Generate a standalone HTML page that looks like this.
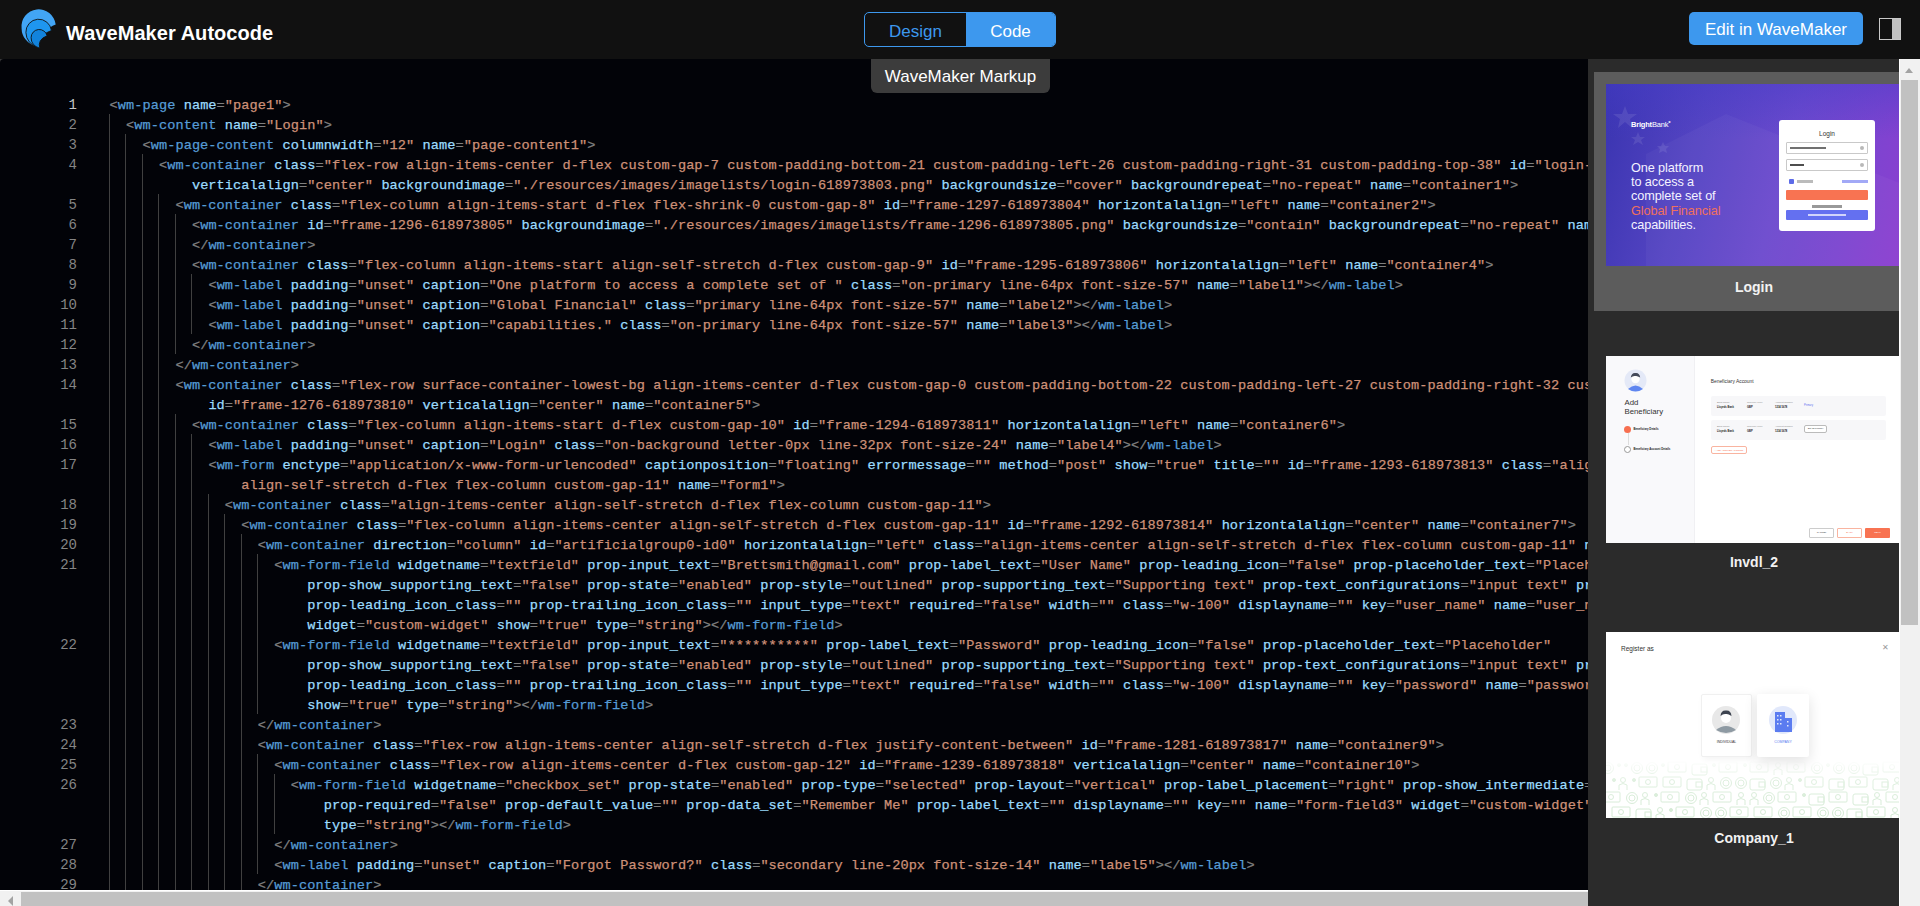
<!DOCTYPE html>
<html><head><meta charset="utf-8">
<style>
*{box-sizing:border-box}
html,body{margin:0;padding:0}
body{width:1920px;height:906px;overflow:hidden;position:relative;background:#020308;font-family:"Liberation Sans",sans-serif}
.hdr{position:absolute;left:0;top:0;width:1920px;height:59px;background:#111111;z-index:5}
.logo{position:absolute;left:19px;top:7px}
.title{position:absolute;left:66px;top:20.5px;letter-spacing:0.05px;font-weight:bold;font-size:20px;line-height:24px;color:#fff;white-space:nowrap}
.tog{position:absolute;left:864px;top:12px;width:192px;height:35px;border:1px solid #3d98ee;border-radius:5px;overflow:hidden;background:#111}
.tog .d{position:absolute;left:0;top:1.5px;width:101px;height:33px;color:#3d98ee;font-size:17px;line-height:33px;text-align:center}
.tog .c{position:absolute;left:101px;top:0;right:0;height:33px;background:#3d98ee;color:#fff;font-size:17px;line-height:38px;text-align:center}
.edit{position:absolute;left:1689px;top:12px;width:174px;height:33px;background:#3d98ee;border-radius:5px;color:#fff;font-size:17px;line-height:35px;text-align:center;white-space:nowrap}
.ptog{position:absolute;left:1879px;top:18px;width:22px;height:22px;border:1.5px solid #c8c8c8;background:#111}
.ptog:after{content:"";position:absolute;right:0;top:0;width:8px;height:100%;background:#c0c0c0}
.code{position:absolute;left:0;top:59px;width:1588px;height:831px;overflow:hidden;background:#020308;border-top-left-radius:4px}
.row{position:absolute;left:0;width:1588px;height:20px}
.row i{position:absolute;top:0;width:1px;height:20px;background:#404040}
.tx{position:absolute;top:0;white-space:pre;font-family:"Liberation Mono",monospace;font-size:13.6px;letter-spacing:0.079px;line-height:20px;color:#d4d4d4;padding-top:2px;-webkit-text-stroke:0.25px currentColor}
.tx b{font-weight:normal}
.tx .d{color:#808080}.tx .t{color:#569cd6}.tx .a{color:#9cdcfe}.tx .s{color:#ce9178}
.ln{position:absolute;left:20px;width:57px;top:0;text-align:right;font-family:"Liberation Mono",monospace;font-size:14px;line-height:20px;color:#858585;padding-top:1px}
.ln.act{color:#c6c6c6}
.tip{position:absolute;left:871px;top:59px;width:179px;height:34px;background:#3c3c3c;border-radius:0 0 6px 6px;color:#fff;font-size:17px;line-height:22px;padding-top:7px;text-align:center;z-index:4;white-space:nowrap}
.hsb{position:absolute;left:0;top:890px;width:1588px;height:16px;background:#f1f1f1;border-top:1px solid #fff}
.hsb .th{position:absolute;left:21px;top:1px;right:0;height:15px;background:#c1c1c1}
.hsb .ar{position:absolute;left:8px;top:5px;width:0;height:0;border-top:5px solid transparent;border-bottom:5px solid transparent;border-right:5px solid #a3a3a3}
.panel{position:absolute;left:1588px;top:59px;width:311px;height:847px;background:#2b2b2b;overflow:hidden}
.vsb{position:absolute;left:1899px;top:59px;width:21px;height:847px;background:#f1f1f1;border-left:1px solid #fff}
.vsb .th{position:absolute;left:1px;top:21px;width:17px;height:545px;background:#c1c1c1}
.vsb .ar{position:absolute;left:5px;top:9px;width:0;height:0;border-left:4.5px solid transparent;border-right:4.5px solid transparent;border-bottom:5px solid #a3a3a3}
.card{position:absolute;left:6px;width:320px}
.card.sel{background:#5c5c5c}
.thumb{position:absolute;left:12px;top:12px;width:296px;overflow:hidden}
.t1{background:linear-gradient(180deg,rgba(70,60,200,.45) 0%,rgba(70,60,200,0) 30%),linear-gradient(105deg,#3934b0 0%,#5444c2 30%,#6c4ace 58%,#7c45d0 80%,#8c3ed0 100%)}
.lbl{position:absolute;left:0;width:320px;text-align:center;color:#f2f2f2;font-weight:bold;font-size:14px;line-height:20px}
</style></head><body>
<div class="hdr">
  <svg class="logo" width="40" height="44" viewBox="19 7 40 44">
    <path d="M55.7 24.5 A17.1 17.1 0 0 0 21.6 28.5 Q21.8 41 36.5 46.8 Q43.5 28.5 55.7 24.5Z" fill="#42a5f5"/>
    <path d="M51.4 30.5 A12.8 12.8 0 0 0 25.9 32.5 Q26.2 43.5 38.5 47.8 Q41 33.5 51.4 30.5Z" fill="#1e96ef" stroke="#111" stroke-width="0.9"/>
    <path d="M47.1 35.8 A8.1 8.1 0 0 0 31.1 37.5 Q31 45.5 39.8 48.3 Q37.2 39.5 47.1 35.8Z" fill="#1283dc" stroke="#111" stroke-width="0.9"/>
  </svg>
  <div class="title">WaveMaker Autocode</div>
  <div class="tog"><div class="d">Design</div><div class="c">Code</div></div>
  <div class="edit">Edit in WaveMaker</div>
  <div class="ptog"></div>
</div>
<div style="position:absolute;left:0;top:59px;width:5px;height:5px;background:#3a3a3a"></div>
<div class="code">
<div class="row" style="top:35px"><div class="tx" style="left:109.50px"><b class="d">&lt;</b><b class="t">wm-page</b> <b class="a">name</b><b class="d">=</b><b class="s">&quot;page1&quot;</b><b class="d">&gt;</b></div><div class="ln act">1</div></div>
<div class="row" style="top:55px"><i style="left:109px"></i><div class="tx" style="left:125.98px"><b class="d">&lt;</b><b class="t">wm-content</b> <b class="a">name</b><b class="d">=</b><b class="s">&quot;Login&quot;</b><b class="d">&gt;</b></div><div class="ln">2</div></div>
<div class="row" style="top:75px"><i style="left:109px"></i><i style="left:125px"></i><div class="tx" style="left:142.46px"><b class="d">&lt;</b><b class="t">wm-page-content</b> <b class="a">columnwidth</b><b class="d">=</b><b class="s">&quot;12&quot;</b> <b class="a">name</b><b class="d">=</b><b class="s">&quot;page-content1&quot;</b><b class="d">&gt;</b></div><div class="ln">3</div></div>
<div class="row" style="top:95px"><i style="left:109px"></i><i style="left:125px"></i><i style="left:142px"></i><div class="tx" style="left:158.94px"><b class="d">&lt;</b><b class="t">wm-container</b> <b class="a">class</b><b class="d">=</b><b class="s">&quot;flex-row align-items-center d-flex custom-gap-7 custom-padding-bottom-21 custom-padding-left-26 custom-padding-right-31 custom-padding-top-38&quot;</b> <b class="a">id</b><b class="d">=</b><b class="s">&quot;login-618973803&quot;</b></div><div class="ln">4</div></div>
<div class="row" style="top:115px"><i style="left:109px"></i><i style="left:125px"></i><i style="left:142px"></i><div class="tx" style="left:191.90px"><b class="a">verticalalign</b><b class="d">=</b><b class="s">&quot;center&quot;</b> <b class="a">backgroundimage</b><b class="d">=</b><b class="s">&quot;./resources/images/imagelists/login-618973803.png&quot;</b> <b class="a">backgroundsize</b><b class="d">=</b><b class="s">&quot;cover&quot;</b> <b class="a">backgroundrepeat</b><b class="d">=</b><b class="s">&quot;no-repeat&quot;</b> <b class="a">name</b><b class="d">=</b><b class="s">&quot;container1&quot;</b><b class="d">&gt;</b></div></div>
<div class="row" style="top:135px"><i style="left:109px"></i><i style="left:125px"></i><i style="left:142px"></i><i style="left:158px"></i><div class="tx" style="left:175.42px"><b class="d">&lt;</b><b class="t">wm-container</b> <b class="a">class</b><b class="d">=</b><b class="s">&quot;flex-column align-items-start d-flex flex-shrink-0 custom-gap-8&quot;</b> <b class="a">id</b><b class="d">=</b><b class="s">&quot;frame-1297-618973804&quot;</b> <b class="a">horizontalalign</b><b class="d">=</b><b class="s">&quot;left&quot;</b> <b class="a">name</b><b class="d">=</b><b class="s">&quot;container2&quot;</b><b class="d">&gt;</b></div><div class="ln">5</div></div>
<div class="row" style="top:155px"><i style="left:109px"></i><i style="left:125px"></i><i style="left:142px"></i><i style="left:158px"></i><i style="left:175px"></i><div class="tx" style="left:191.90px"><b class="d">&lt;</b><b class="t">wm-container</b> <b class="a">id</b><b class="d">=</b><b class="s">&quot;frame-1296-618973805&quot;</b> <b class="a">backgroundimage</b><b class="d">=</b><b class="s">&quot;./resources/images/imagelists/frame-1296-618973805.png&quot;</b> <b class="a">backgroundsize</b><b class="d">=</b><b class="s">&quot;contain&quot;</b> <b class="a">backgroundrepeat</b><b class="d">=</b><b class="s">&quot;no-repeat&quot;</b> <b class="a">name</b><b class="d">=</b><b class="s">&quot;container3&quot;</b><b class="d">&gt;</b></div><div class="ln">6</div></div>
<div class="row" style="top:175px"><i style="left:109px"></i><i style="left:125px"></i><i style="left:142px"></i><i style="left:158px"></i><i style="left:175px"></i><div class="tx" style="left:191.90px"><b class="d">&lt;/</b><b class="t">wm-container</b><b class="d">&gt;</b></div><div class="ln">7</div></div>
<div class="row" style="top:195px"><i style="left:109px"></i><i style="left:125px"></i><i style="left:142px"></i><i style="left:158px"></i><i style="left:175px"></i><div class="tx" style="left:191.90px"><b class="d">&lt;</b><b class="t">wm-container</b> <b class="a">class</b><b class="d">=</b><b class="s">&quot;flex-column align-items-start align-self-stretch d-flex custom-gap-9&quot;</b> <b class="a">id</b><b class="d">=</b><b class="s">&quot;frame-1295-618973806&quot;</b> <b class="a">horizontalalign</b><b class="d">=</b><b class="s">&quot;left&quot;</b> <b class="a">name</b><b class="d">=</b><b class="s">&quot;container4&quot;</b><b class="d">&gt;</b></div><div class="ln">8</div></div>
<div class="row" style="top:215px"><i style="left:109px"></i><i style="left:125px"></i><i style="left:142px"></i><i style="left:158px"></i><i style="left:175px"></i><i style="left:191px"></i><div class="tx" style="left:208.38px"><b class="d">&lt;</b><b class="t">wm-label</b> <b class="a">padding</b><b class="d">=</b><b class="s">&quot;unset&quot;</b> <b class="a">caption</b><b class="d">=</b><b class="s">&quot;One platform to access a complete set of &quot;</b> <b class="a">class</b><b class="d">=</b><b class="s">&quot;on-primary line-64px font-size-57&quot;</b> <b class="a">name</b><b class="d">=</b><b class="s">&quot;label1&quot;</b><b class="d">&gt;</b><b class="d">&lt;/</b><b class="t">wm-label</b><b class="d">&gt;</b></div><div class="ln">9</div></div>
<div class="row" style="top:235px"><i style="left:109px"></i><i style="left:125px"></i><i style="left:142px"></i><i style="left:158px"></i><i style="left:175px"></i><i style="left:191px"></i><div class="tx" style="left:208.38px"><b class="d">&lt;</b><b class="t">wm-label</b> <b class="a">padding</b><b class="d">=</b><b class="s">&quot;unset&quot;</b> <b class="a">caption</b><b class="d">=</b><b class="s">&quot;Global Financial&quot;</b> <b class="a">class</b><b class="d">=</b><b class="s">&quot;primary line-64px font-size-57&quot;</b> <b class="a">name</b><b class="d">=</b><b class="s">&quot;label2&quot;</b><b class="d">&gt;</b><b class="d">&lt;/</b><b class="t">wm-label</b><b class="d">&gt;</b></div><div class="ln">10</div></div>
<div class="row" style="top:255px"><i style="left:109px"></i><i style="left:125px"></i><i style="left:142px"></i><i style="left:158px"></i><i style="left:175px"></i><i style="left:191px"></i><div class="tx" style="left:208.38px"><b class="d">&lt;</b><b class="t">wm-label</b> <b class="a">padding</b><b class="d">=</b><b class="s">&quot;unset&quot;</b> <b class="a">caption</b><b class="d">=</b><b class="s">&quot;capabilities.&quot;</b> <b class="a">class</b><b class="d">=</b><b class="s">&quot;on-primary line-64px font-size-57&quot;</b> <b class="a">name</b><b class="d">=</b><b class="s">&quot;label3&quot;</b><b class="d">&gt;</b><b class="d">&lt;/</b><b class="t">wm-label</b><b class="d">&gt;</b></div><div class="ln">11</div></div>
<div class="row" style="top:275px"><i style="left:109px"></i><i style="left:125px"></i><i style="left:142px"></i><i style="left:158px"></i><i style="left:175px"></i><div class="tx" style="left:191.90px"><b class="d">&lt;/</b><b class="t">wm-container</b><b class="d">&gt;</b></div><div class="ln">12</div></div>
<div class="row" style="top:295px"><i style="left:109px"></i><i style="left:125px"></i><i style="left:142px"></i><i style="left:158px"></i><div class="tx" style="left:175.42px"><b class="d">&lt;/</b><b class="t">wm-container</b><b class="d">&gt;</b></div><div class="ln">13</div></div>
<div class="row" style="top:315px"><i style="left:109px"></i><i style="left:125px"></i><i style="left:142px"></i><i style="left:158px"></i><div class="tx" style="left:175.42px"><b class="d">&lt;</b><b class="t">wm-container</b> <b class="a">class</b><b class="d">=</b><b class="s">&quot;flex-row surface-container-lowest-bg align-items-center d-flex custom-gap-0 custom-padding-bottom-22 custom-padding-left-27 custom-padding-right-32 custom-padding-top-38&quot;</b></div><div class="ln">14</div></div>
<div class="row" style="top:335px"><i style="left:109px"></i><i style="left:125px"></i><i style="left:142px"></i><i style="left:158px"></i><div class="tx" style="left:208.38px"><b class="a">id</b><b class="d">=</b><b class="s">&quot;frame-1276-618973810&quot;</b> <b class="a">verticalalign</b><b class="d">=</b><b class="s">&quot;center&quot;</b> <b class="a">name</b><b class="d">=</b><b class="s">&quot;container5&quot;</b><b class="d">&gt;</b></div></div>
<div class="row" style="top:355px"><i style="left:109px"></i><i style="left:125px"></i><i style="left:142px"></i><i style="left:158px"></i><i style="left:175px"></i><div class="tx" style="left:191.90px"><b class="d">&lt;</b><b class="t">wm-container</b> <b class="a">class</b><b class="d">=</b><b class="s">&quot;flex-column align-items-start d-flex custom-gap-10&quot;</b> <b class="a">id</b><b class="d">=</b><b class="s">&quot;frame-1294-618973811&quot;</b> <b class="a">horizontalalign</b><b class="d">=</b><b class="s">&quot;left&quot;</b> <b class="a">name</b><b class="d">=</b><b class="s">&quot;container6&quot;</b><b class="d">&gt;</b></div><div class="ln">15</div></div>
<div class="row" style="top:375px"><i style="left:109px"></i><i style="left:125px"></i><i style="left:142px"></i><i style="left:158px"></i><i style="left:175px"></i><i style="left:191px"></i><div class="tx" style="left:208.38px"><b class="d">&lt;</b><b class="t">wm-label</b> <b class="a">padding</b><b class="d">=</b><b class="s">&quot;unset&quot;</b> <b class="a">caption</b><b class="d">=</b><b class="s">&quot;Login&quot;</b> <b class="a">class</b><b class="d">=</b><b class="s">&quot;on-background letter-0px line-32px font-size-24&quot;</b> <b class="a">name</b><b class="d">=</b><b class="s">&quot;label4&quot;</b><b class="d">&gt;</b><b class="d">&lt;/</b><b class="t">wm-label</b><b class="d">&gt;</b></div><div class="ln">16</div></div>
<div class="row" style="top:395px"><i style="left:109px"></i><i style="left:125px"></i><i style="left:142px"></i><i style="left:158px"></i><i style="left:175px"></i><i style="left:191px"></i><div class="tx" style="left:208.38px"><b class="d">&lt;</b><b class="t">wm-form</b> <b class="a">enctype</b><b class="d">=</b><b class="s">&quot;application/x-www-form-urlencoded&quot;</b> <b class="a">captionposition</b><b class="d">=</b><b class="s">&quot;floating&quot;</b> <b class="a">errormessage</b><b class="d">=</b><b class="s">&quot;&quot;</b> <b class="a">method</b><b class="d">=</b><b class="s">&quot;post&quot;</b> <b class="a">show</b><b class="d">=</b><b class="s">&quot;true&quot;</b> <b class="a">title</b><b class="d">=</b><b class="s">&quot;&quot;</b> <b class="a">id</b><b class="d">=</b><b class="s">&quot;frame-1293-618973813&quot;</b> <b class="a">class</b><b class="d">=</b><b class="s">&quot;align-items-center</b></div><div class="ln">17</div></div>
<div class="row" style="top:415px"><i style="left:109px"></i><i style="left:125px"></i><i style="left:142px"></i><i style="left:158px"></i><i style="left:175px"></i><i style="left:191px"></i><div class="tx" style="left:241.35px"><b class="s">align-self-stretch d-flex flex-column custom-gap-11&quot;</b> <b class="a">name</b><b class="d">=</b><b class="s">&quot;form1&quot;</b><b class="d">&gt;</b></div></div>
<div class="row" style="top:435px"><i style="left:109px"></i><i style="left:125px"></i><i style="left:142px"></i><i style="left:158px"></i><i style="left:175px"></i><i style="left:191px"></i><i style="left:208px"></i><div class="tx" style="left:224.87px"><b class="d">&lt;</b><b class="t">wm-container</b> <b class="a">class</b><b class="d">=</b><b class="s">&quot;align-items-center align-self-stretch d-flex flex-column custom-gap-11&quot;</b><b class="d">&gt;</b></div><div class="ln">18</div></div>
<div class="row" style="top:455px"><i style="left:109px"></i><i style="left:125px"></i><i style="left:142px"></i><i style="left:158px"></i><i style="left:175px"></i><i style="left:191px"></i><i style="left:208px"></i><i style="left:224px"></i><div class="tx" style="left:241.35px"><b class="d">&lt;</b><b class="t">wm-container</b> <b class="a">class</b><b class="d">=</b><b class="s">&quot;flex-column align-items-center align-self-stretch d-flex custom-gap-11&quot;</b> <b class="a">id</b><b class="d">=</b><b class="s">&quot;frame-1292-618973814&quot;</b> <b class="a">horizontalalign</b><b class="d">=</b><b class="s">&quot;center&quot;</b> <b class="a">name</b><b class="d">=</b><b class="s">&quot;container7&quot;</b><b class="d">&gt;</b></div><div class="ln">19</div></div>
<div class="row" style="top:475px"><i style="left:109px"></i><i style="left:125px"></i><i style="left:142px"></i><i style="left:158px"></i><i style="left:175px"></i><i style="left:191px"></i><i style="left:208px"></i><i style="left:224px"></i><i style="left:241px"></i><div class="tx" style="left:257.83px"><b class="d">&lt;</b><b class="t">wm-container</b> <b class="a">direction</b><b class="d">=</b><b class="s">&quot;column&quot;</b> <b class="a">id</b><b class="d">=</b><b class="s">&quot;artificialgroup0-id0&quot;</b> <b class="a">horizontalalign</b><b class="d">=</b><b class="s">&quot;left&quot;</b> <b class="a">class</b><b class="d">=</b><b class="s">&quot;align-items-center align-self-stretch d-flex flex-column custom-gap-11&quot;</b> <b class="a">name</b><b class="d">=</b><b class="s">&quot;container8&quot;</b><b class="d">&gt;</b></div><div class="ln">20</div></div>
<div class="row" style="top:495px"><i style="left:109px"></i><i style="left:125px"></i><i style="left:142px"></i><i style="left:158px"></i><i style="left:175px"></i><i style="left:191px"></i><i style="left:208px"></i><i style="left:224px"></i><i style="left:241px"></i><i style="left:257px"></i><div class="tx" style="left:274.31px"><b class="d">&lt;</b><b class="t">wm-form-field</b> <b class="a">widgetname</b><b class="d">=</b><b class="s">&quot;textfield&quot;</b> <b class="a">prop-input_text</b><b class="d">=</b><b class="s">&quot;Brettsmith@gmail.com&quot;</b> <b class="a">prop-label_text</b><b class="d">=</b><b class="s">&quot;User Name&quot;</b> <b class="a">prop-leading_icon</b><b class="d">=</b><b class="s">&quot;false&quot;</b> <b class="a">prop-placeholder_text</b><b class="d">=</b><b class="s">&quot;Placeholder&quot;</b></div><div class="ln">21</div></div>
<div class="row" style="top:515px"><i style="left:109px"></i><i style="left:125px"></i><i style="left:142px"></i><i style="left:158px"></i><i style="left:175px"></i><i style="left:191px"></i><i style="left:208px"></i><i style="left:224px"></i><i style="left:241px"></i><i style="left:257px"></i><div class="tx" style="left:307.27px"><b class="a">prop-show_supporting_text</b><b class="d">=</b><b class="s">&quot;false&quot;</b> <b class="a">prop-state</b><b class="d">=</b><b class="s">&quot;enabled&quot;</b> <b class="a">prop-style</b><b class="d">=</b><b class="s">&quot;outlined&quot;</b> <b class="a">prop-supporting_text</b><b class="d">=</b><b class="s">&quot;Supporting text&quot;</b> <b class="a">prop-text_configurations</b><b class="d">=</b><b class="s">&quot;input text&quot;</b> <b class="a">prop-trailing_icon</b><b class="d">=</b><b class="s">&quot;false&quot;</b></div></div>
<div class="row" style="top:535px"><i style="left:109px"></i><i style="left:125px"></i><i style="left:142px"></i><i style="left:158px"></i><i style="left:175px"></i><i style="left:191px"></i><i style="left:208px"></i><i style="left:224px"></i><i style="left:241px"></i><i style="left:257px"></i><div class="tx" style="left:307.27px"><b class="a">prop-leading_icon_class</b><b class="d">=</b><b class="s">&quot;&quot;</b> <b class="a">prop-trailing_icon_class</b><b class="d">=</b><b class="s">&quot;&quot;</b> <b class="a">input_type</b><b class="d">=</b><b class="s">&quot;text&quot;</b> <b class="a">required</b><b class="d">=</b><b class="s">&quot;false&quot;</b> <b class="a">width</b><b class="d">=</b><b class="s">&quot;&quot;</b> <b class="a">class</b><b class="d">=</b><b class="s">&quot;w-100&quot;</b> <b class="a">displayname</b><b class="d">=</b><b class="s">&quot;&quot;</b> <b class="a">key</b><b class="d">=</b><b class="s">&quot;user_name&quot;</b> <b class="a">name</b><b class="d">=</b><b class="s">&quot;user_name&quot;</b></div></div>
<div class="row" style="top:555px"><i style="left:109px"></i><i style="left:125px"></i><i style="left:142px"></i><i style="left:158px"></i><i style="left:175px"></i><i style="left:191px"></i><i style="left:208px"></i><i style="left:224px"></i><i style="left:241px"></i><i style="left:257px"></i><div class="tx" style="left:307.27px"><b class="a">widget</b><b class="d">=</b><b class="s">&quot;custom-widget&quot;</b> <b class="a">show</b><b class="d">=</b><b class="s">&quot;true&quot;</b> <b class="a">type</b><b class="d">=</b><b class="s">&quot;string&quot;</b><b class="d">&gt;</b><b class="d">&lt;/</b><b class="t">wm-form-field</b><b class="d">&gt;</b></div></div>
<div class="row" style="top:575px"><i style="left:109px"></i><i style="left:125px"></i><i style="left:142px"></i><i style="left:158px"></i><i style="left:175px"></i><i style="left:191px"></i><i style="left:208px"></i><i style="left:224px"></i><i style="left:241px"></i><i style="left:257px"></i><div class="tx" style="left:274.31px"><b class="d">&lt;</b><b class="t">wm-form-field</b> <b class="a">widgetname</b><b class="d">=</b><b class="s">&quot;textfield&quot;</b> <b class="a">prop-input_text</b><b class="d">=</b><b class="s">&quot;**********&quot;</b> <b class="a">prop-label_text</b><b class="d">=</b><b class="s">&quot;Password&quot;</b> <b class="a">prop-leading_icon</b><b class="d">=</b><b class="s">&quot;false&quot;</b> <b class="a">prop-placeholder_text</b><b class="d">=</b><b class="s">&quot;Placeholder&quot;</b></div><div class="ln">22</div></div>
<div class="row" style="top:595px"><i style="left:109px"></i><i style="left:125px"></i><i style="left:142px"></i><i style="left:158px"></i><i style="left:175px"></i><i style="left:191px"></i><i style="left:208px"></i><i style="left:224px"></i><i style="left:241px"></i><i style="left:257px"></i><div class="tx" style="left:307.27px"><b class="a">prop-show_supporting_text</b><b class="d">=</b><b class="s">&quot;false&quot;</b> <b class="a">prop-state</b><b class="d">=</b><b class="s">&quot;enabled&quot;</b> <b class="a">prop-style</b><b class="d">=</b><b class="s">&quot;outlined&quot;</b> <b class="a">prop-supporting_text</b><b class="d">=</b><b class="s">&quot;Supporting text&quot;</b> <b class="a">prop-text_configurations</b><b class="d">=</b><b class="s">&quot;input text&quot;</b> <b class="a">prop-trailing_icon</b><b class="d">=</b><b class="s">&quot;true&quot;</b></div></div>
<div class="row" style="top:615px"><i style="left:109px"></i><i style="left:125px"></i><i style="left:142px"></i><i style="left:158px"></i><i style="left:175px"></i><i style="left:191px"></i><i style="left:208px"></i><i style="left:224px"></i><i style="left:241px"></i><i style="left:257px"></i><div class="tx" style="left:307.27px"><b class="a">prop-leading_icon_class</b><b class="d">=</b><b class="s">&quot;&quot;</b> <b class="a">prop-trailing_icon_class</b><b class="d">=</b><b class="s">&quot;&quot;</b> <b class="a">input_type</b><b class="d">=</b><b class="s">&quot;text&quot;</b> <b class="a">required</b><b class="d">=</b><b class="s">&quot;false&quot;</b> <b class="a">width</b><b class="d">=</b><b class="s">&quot;&quot;</b> <b class="a">class</b><b class="d">=</b><b class="s">&quot;w-100&quot;</b> <b class="a">displayname</b><b class="d">=</b><b class="s">&quot;&quot;</b> <b class="a">key</b><b class="d">=</b><b class="s">&quot;password&quot;</b> <b class="a">name</b><b class="d">=</b><b class="s">&quot;password&quot;</b></div></div>
<div class="row" style="top:635px"><i style="left:109px"></i><i style="left:125px"></i><i style="left:142px"></i><i style="left:158px"></i><i style="left:175px"></i><i style="left:191px"></i><i style="left:208px"></i><i style="left:224px"></i><i style="left:241px"></i><i style="left:257px"></i><div class="tx" style="left:307.27px"><b class="a">show</b><b class="d">=</b><b class="s">&quot;true&quot;</b> <b class="a">type</b><b class="d">=</b><b class="s">&quot;string&quot;</b><b class="d">&gt;</b><b class="d">&lt;/</b><b class="t">wm-form-field</b><b class="d">&gt;</b></div></div>
<div class="row" style="top:655px"><i style="left:109px"></i><i style="left:125px"></i><i style="left:142px"></i><i style="left:158px"></i><i style="left:175px"></i><i style="left:191px"></i><i style="left:208px"></i><i style="left:224px"></i><i style="left:241px"></i><div class="tx" style="left:257.83px"><b class="d">&lt;/</b><b class="t">wm-container</b><b class="d">&gt;</b></div><div class="ln">23</div></div>
<div class="row" style="top:675px"><i style="left:109px"></i><i style="left:125px"></i><i style="left:142px"></i><i style="left:158px"></i><i style="left:175px"></i><i style="left:191px"></i><i style="left:208px"></i><i style="left:224px"></i><i style="left:241px"></i><div class="tx" style="left:257.83px"><b class="d">&lt;</b><b class="t">wm-container</b> <b class="a">class</b><b class="d">=</b><b class="s">&quot;flex-row align-items-center align-self-stretch d-flex justify-content-between&quot;</b> <b class="a">id</b><b class="d">=</b><b class="s">&quot;frame-1281-618973817&quot;</b> <b class="a">name</b><b class="d">=</b><b class="s">&quot;container9&quot;</b><b class="d">&gt;</b></div><div class="ln">24</div></div>
<div class="row" style="top:695px"><i style="left:109px"></i><i style="left:125px"></i><i style="left:142px"></i><i style="left:158px"></i><i style="left:175px"></i><i style="left:191px"></i><i style="left:208px"></i><i style="left:224px"></i><i style="left:241px"></i><i style="left:257px"></i><div class="tx" style="left:274.31px"><b class="d">&lt;</b><b class="t">wm-container</b> <b class="a">class</b><b class="d">=</b><b class="s">&quot;flex-row align-items-center d-flex custom-gap-12&quot;</b> <b class="a">id</b><b class="d">=</b><b class="s">&quot;frame-1239-618973818&quot;</b> <b class="a">verticalalign</b><b class="d">=</b><b class="s">&quot;center&quot;</b> <b class="a">name</b><b class="d">=</b><b class="s">&quot;container10&quot;</b><b class="d">&gt;</b></div><div class="ln">25</div></div>
<div class="row" style="top:715px"><i style="left:109px"></i><i style="left:125px"></i><i style="left:142px"></i><i style="left:158px"></i><i style="left:175px"></i><i style="left:191px"></i><i style="left:208px"></i><i style="left:224px"></i><i style="left:241px"></i><i style="left:257px"></i><i style="left:274px"></i><div class="tx" style="left:290.79px"><b class="d">&lt;</b><b class="t">wm-form-field</b> <b class="a">widgetname</b><b class="d">=</b><b class="s">&quot;checkbox_set&quot;</b> <b class="a">prop-state</b><b class="d">=</b><b class="s">&quot;enabled&quot;</b> <b class="a">prop-type</b><b class="d">=</b><b class="s">&quot;selected&quot;</b> <b class="a">prop-layout</b><b class="d">=</b><b class="s">&quot;vertical&quot;</b> <b class="a">prop-label_placement</b><b class="d">=</b><b class="s">&quot;right&quot;</b> <b class="a">prop-show_intermediate</b><b class="d">=</b><b class="s">&quot;false&quot;</b></div><div class="ln">26</div></div>
<div class="row" style="top:735px"><i style="left:109px"></i><i style="left:125px"></i><i style="left:142px"></i><i style="left:158px"></i><i style="left:175px"></i><i style="left:191px"></i><i style="left:208px"></i><i style="left:224px"></i><i style="left:241px"></i><i style="left:257px"></i><i style="left:274px"></i><div class="tx" style="left:323.75px"><b class="a">prop-required</b><b class="d">=</b><b class="s">&quot;false&quot;</b> <b class="a">prop-default_value</b><b class="d">=</b><b class="s">&quot;&quot;</b> <b class="a">prop-data_set</b><b class="d">=</b><b class="s">&quot;Remember Me&quot;</b> <b class="a">prop-label_text</b><b class="d">=</b><b class="s">&quot;&quot;</b> <b class="a">displayname</b><b class="d">=</b><b class="s">&quot;&quot;</b> <b class="a">key</b><b class="d">=</b><b class="s">&quot;&quot;</b> <b class="a">name</b><b class="d">=</b><b class="s">&quot;form-field3&quot;</b> <b class="a">widget</b><b class="d">=</b><b class="s">&quot;custom-widget&quot;</b></div></div>
<div class="row" style="top:755px"><i style="left:109px"></i><i style="left:125px"></i><i style="left:142px"></i><i style="left:158px"></i><i style="left:175px"></i><i style="left:191px"></i><i style="left:208px"></i><i style="left:224px"></i><i style="left:241px"></i><i style="left:257px"></i><i style="left:274px"></i><div class="tx" style="left:323.75px"><b class="a">type</b><b class="d">=</b><b class="s">&quot;string&quot;</b><b class="d">&gt;</b><b class="d">&lt;/</b><b class="t">wm-form-field</b><b class="d">&gt;</b></div></div>
<div class="row" style="top:775px"><i style="left:109px"></i><i style="left:125px"></i><i style="left:142px"></i><i style="left:158px"></i><i style="left:175px"></i><i style="left:191px"></i><i style="left:208px"></i><i style="left:224px"></i><i style="left:241px"></i><i style="left:257px"></i><div class="tx" style="left:274.31px"><b class="d">&lt;/</b><b class="t">wm-container</b><b class="d">&gt;</b></div><div class="ln">27</div></div>
<div class="row" style="top:795px"><i style="left:109px"></i><i style="left:125px"></i><i style="left:142px"></i><i style="left:158px"></i><i style="left:175px"></i><i style="left:191px"></i><i style="left:208px"></i><i style="left:224px"></i><i style="left:241px"></i><i style="left:257px"></i><div class="tx" style="left:274.31px"><b class="d">&lt;</b><b class="t">wm-label</b> <b class="a">padding</b><b class="d">=</b><b class="s">&quot;unset&quot;</b> <b class="a">caption</b><b class="d">=</b><b class="s">&quot;Forgot Password?&quot;</b> <b class="a">class</b><b class="d">=</b><b class="s">&quot;secondary line-20px font-size-14&quot;</b> <b class="a">name</b><b class="d">=</b><b class="s">&quot;label5&quot;</b><b class="d">&gt;</b><b class="d">&lt;/</b><b class="t">wm-label</b><b class="d">&gt;</b></div><div class="ln">28</div></div>
<div class="row" style="top:815px"><i style="left:109px"></i><i style="left:125px"></i><i style="left:142px"></i><i style="left:158px"></i><i style="left:175px"></i><i style="left:191px"></i><i style="left:208px"></i><i style="left:224px"></i><i style="left:241px"></i><div class="tx" style="left:257.83px"><b class="d">&lt;/</b><b class="t">wm-container</b><b class="d">&gt;</b></div><div class="ln">29</div></div>
</div>
<div class="tip">WaveMaker Markup</div>
<div class="hsb"><div class="ar"></div><div class="th"></div></div>
<div class="panel">
  <div class="card sel" style="top:13px;height:239px">
    <div class="thumb t1" style="height:182px">
      <svg style="position:absolute;left:0;top:0" width="296" height="182">
        <g fill="#ffffff" opacity="0.09">
          <polygon points="19,22 22,30 31,30 24,35 26,44 19,38 12,44 14,35 7,30 16,30"/>
          <polygon points="32,48 34,53 39,53 35,56 37,61 32,58 27,61 29,56 25,53 30,53"/>
          <polygon points="57,58 59,62 63,62 60,65 61,69 57,67 53,69 54,65 51,62 55,62"/>
        </g>
        <g fill="#ffffff" opacity="0.035">
          <polygon points="40,70 120,30 296,100 296,182 40,182"/>
        </g>
      </svg>
      <div style="position:absolute;left:25px;top:36px;color:#fff;font-size:7.5px;font-weight:bold;letter-spacing:-0.2px;white-space:nowrap">Bright<span style="font-weight:normal">Bank</span><span style="font-size:6px;vertical-align:top">*</span></div>
      <div style="position:absolute;left:25px;top:77px;color:#f4f2ff;font-size:12.7px;line-height:14.2px;white-space:nowrap;letter-spacing:-0.1px">One platform<br>to access a<br>complete set of<br><span style="color:#f0705c">Global Financial</span><br>capabilities.</div>
      <div style="position:absolute;left:173px;top:36px;width:96px;height:111px;background:#fff;border-radius:3px">
        <div style="position:absolute;left:0;top:9.5px;width:96px;text-align:center;font-size:6.5px;color:#333">Login</div>
        <div style="position:absolute;left:7px;top:22px;width:82px;height:12px;border:1px solid #c9c9c9;border-radius:1px"><div style="position:absolute;left:3px;top:4px;width:36px;height:2px;background:#333;opacity:.7"></div><div style="position:absolute;right:3px;top:3px;width:4px;height:4px;background:#888;opacity:.6;border-radius:2px"></div></div>
        <div style="position:absolute;left:7px;top:39px;width:82px;height:12px;border:1px solid #c9c9c9;border-radius:1px"><div style="position:absolute;left:3px;top:4px;width:14px;height:1.5px;background:#222;opacity:.8"></div><div style="position:absolute;right:3px;top:3px;width:4px;height:4px;background:#888;opacity:.6;border-radius:2px"></div></div>
        <div style="position:absolute;left:10px;top:59px;width:5px;height:5px;background:#5d6be8;border-radius:1px"></div>
        <div style="position:absolute;left:18px;top:60px;width:16px;height:3px;background:#777;opacity:.5"></div>
        <div style="position:absolute;left:63px;top:60px;width:26px;height:3px;background:#6470f0;opacity:.6"></div>
        <div style="position:absolute;left:7px;top:70px;width:82px;height:10px;background:#f87352;border-radius:1px"></div>
        <div style="position:absolute;left:33px;top:85px;width:30px;height:3px;background:#555;opacity:.6"></div>
        <div style="position:absolute;left:7px;top:90px;width:82px;height:10px;background:#6470f0;border-radius:1px"><div style="position:absolute;left:22px;top:4px;width:38px;height:2px;background:#fff;opacity:.7"></div></div>
      </div>
    </div>
    <div class="lbl" style="top:205px">Login</div>
  </div>
  <div class="card" style="top:285px;height:243px">
    <div class="thumb" style="height:187px;background:#fff;font-family:'Liberation Sans',sans-serif">
      <div style="position:absolute;left:0;top:0;width:89px;height:187px;background:#f9f9fb;border-right:1px solid #f0f0f3"></div>
      <svg style="position:absolute;left:18px;top:13px" width="23" height="23" viewBox="0 0 23 23">
        <circle cx="11.5" cy="11.5" r="11" fill="#e4e9f7"/>
        <path d="M4 20 Q11.5 13 19 20 Q11.5 25 4 20Z" fill="#5f86f0"/>
        <circle cx="11.5" cy="10" r="4.2" fill="#fff"/>
        <path d="M6.8 8.5 Q7.5 3.5 11.5 4 Q15.5 3.5 16.2 8.5 Q13 6.5 11.5 7 Q9 6.5 6.8 8.5Z" fill="#444a5a"/>
      </svg>
      <div style="position:absolute;left:18.5px;top:41.6px;font-size:7.8px;line-height:9.5px;color:#333;white-space:nowrap">Add<br>Beneficiary</div>
      <div style="position:absolute;left:18px;top:69.5px;width:7px;height:7px;border-radius:50%;background:#f76f50"></div>
      <div style="position:absolute;left:27.5px;top:72px;font-size:2.8px;line-height:3.2px;font-weight:bold;color:#222;white-space:nowrap">Beneficiary Details</div>
      <div style="position:absolute;left:21.5px;top:77px;width:1px;height:12px;background:#ddd"></div>
      <div style="position:absolute;left:18px;top:89.5px;width:7px;height:7px;border-radius:50%;border:1px solid #999;background:#fff"></div>
      <div style="position:absolute;left:27.5px;top:91.7px;font-size:2.8px;line-height:3.2px;font-weight:bold;color:#222;white-space:nowrap">Beneficiary Account Details</div>
      <div style="position:absolute;left:104.7px;top:23.4px;font-size:4.9px;line-height:6px;color:#333;white-space:nowrap">Beneficiary Account</div>
      <div style="position:absolute;left:105px;top:40px;width:175px;height:20px;background:#f7f7f9;border-radius:2px;font-size:2.4px;line-height:3px;white-space:nowrap">
        <div style="position:absolute;left:6px;top:5px;color:#888">Bank Name</div><div style="position:absolute;left:6px;top:10px;color:#222;font-weight:bold;font-size:2.6px">Lloyeds Bank</div>
        <div style="position:absolute;left:36px;top:5px;color:#888">Currency Type</div><div style="position:absolute;left:36px;top:10px;color:#222;font-weight:bold;font-size:2.6px">GBP</div>
        <div style="position:absolute;left:64px;top:5px;color:#888">Account Number</div><div style="position:absolute;left:64px;top:10px;color:#222;font-weight:bold;font-size:2.6px">1234 5678</div>
        <div style="position:absolute;left:93px;top:8px;color:#6470f0;font-size:2.6px">Primary</div>
      </div>
      <div style="position:absolute;left:105px;top:64px;width:175px;height:20px;background:#f7f7f9;border-radius:2px;font-size:2.4px;line-height:3px;white-space:nowrap">
        <div style="position:absolute;left:6px;top:5px;color:#888">Bank Name</div><div style="position:absolute;left:6px;top:10px;color:#222;font-weight:bold;font-size:2.6px">Lloyeds Bank</div>
        <div style="position:absolute;left:36px;top:5px;color:#888">Currency Type</div><div style="position:absolute;left:36px;top:10px;color:#222;font-weight:bold;font-size:2.6px">GBP</div>
        <div style="position:absolute;left:64px;top:5px;color:#888">Account Number</div><div style="position:absolute;left:64px;top:10px;color:#222;font-weight:bold;font-size:2.6px">1234 5678</div>
        <div style="position:absolute;left:93px;top:5px;width:23px;height:8px;border:1px solid #bbb;border-radius:2px;background:#fff;font-size:2.4px;line-height:6px;text-align:center;color:#333">Set as Primary</div>
      </div>
      <div style="position:absolute;left:105px;top:90px;width:36px;height:8px;border:1px solid #f9b4a0;border-radius:2px;font-size:2.2px;line-height:6px;color:#f76f50;text-align:center;white-space:nowrap">+ ADD ANOTHER ACCOUNT</div>
      <div style="position:absolute;left:203px;top:172px;width:25px;height:10px;border:1px solid #ccc;border-radius:1px;font-size:2.4px;line-height:8px;text-align:center;color:#444">CANCEL</div>
      <div style="position:absolute;left:231px;top:172px;width:25px;height:10px;border:1px solid #f9b4a0;border-radius:1px;font-size:2.4px;line-height:8px;text-align:center;color:#f76f50">BACK</div>
      <div style="position:absolute;left:259px;top:172px;width:25px;height:10px;background:#f87352;border-radius:1px;font-size:2.4px;line-height:10px;text-align:center;color:#fff">NEXT</div>
    </div>
    <div class="lbl" style="top:208px">Invdl_2</div>
  </div>
  <div class="card" style="top:561px;height:242px">
    <div class="thumb" style="height:186px;background:#fff">
      <div style="position:absolute;left:15px;top:13px;font-size:6.5px;color:#333;white-space:nowrap">Register as</div>
      <div style="position:absolute;left:276px;top:11px;font-size:8px;color:#999">&#x2715;</div>
      <svg style="position:absolute;left:0;top:128px" width="296" height="58"><g fill="none" stroke="#d3ead3" stroke-width="1"><circle cx="2" cy="8" r="5.5"/><circle cx="2" cy="8" r="3"/><circle cx="13" cy="5" r="1.5" fill="#d5ebd5"/><circle cx="20" cy="5" r="1.5" fill="#d5ebd5"/><circle cx="31" cy="8" r="5.5"/><circle cx="31" cy="8" r="3"/><circle cx="46" cy="8" r="5.5"/><circle cx="46" cy="8" r="3"/><circle cx="57" cy="5" r="1.5" fill="#d5ebd5"/><rect x="62" y="2" width="18" height="10" rx="1"/><circle cx="71" cy="7" r="2.5"/><rect x="86" y="4" width="15" height="11" rx="2"/><rect x="95" y="7" width="6" height="5"/><circle cx="108" cy="5" r="1.5" fill="#d5ebd5"/><rect x="113" y="2" width="18" height="10" rx="1"/><circle cx="122" cy="7" r="2.5"/><circle cx="139" cy="5" r="1.5" fill="#d5ebd5"/><rect x="144" y="2" width="18" height="10" rx="1"/><circle cx="153" cy="7" r="2.5"/><circle cx="172" cy="5" r="2.5"/><path d="M168 15 V10 Q172 7 176 10 V15"/><rect x="181" y="2" width="18" height="10" rx="1"/><circle cx="190" cy="7" r="2.5"/><circle cx="211" cy="8" r="5.5"/><circle cx="211" cy="8" r="3"/><circle cx="222" cy="5" r="1.5" fill="#d5ebd5"/><circle cx="233" cy="8" r="5.5"/><circle cx="233" cy="8" r="3"/><circle cx="248" cy="8" r="5.5"/><circle cx="248" cy="8" r="3"/><rect x="257" y="4" width="15" height="11" rx="2"/><rect x="266" y="7" width="6" height="5"/><rect x="277" y="2" width="18" height="10" rx="1"/><circle cx="286" cy="7" r="2.5"/><circle cx="8" cy="20" r="1.5" fill="#d5ebd5"/><circle cx="17" cy="20" r="2.5"/><path d="M13 30 V25 Q17 22 21 25 V30"/><circle cx="28" cy="20" r="1.5" fill="#d5ebd5"/><rect x="33" y="17" width="18" height="10" rx="1"/><circle cx="42" cy="22" r="2.5"/><rect x="57" y="17" width="18" height="10" rx="1"/><circle cx="66" cy="22" r="2.5"/><rect x="81" y="19" width="15" height="11" rx="2"/><rect x="90" y="22" width="6" height="5"/><circle cx="105" cy="20" r="2.5"/><path d="M101 30 V25 Q105 22 109 25 V30"/><circle cx="120" cy="23" r="5.5"/><circle cx="120" cy="23" r="3"/><circle cx="135" cy="23" r="5.5"/><circle cx="135" cy="23" r="3"/><rect x="144" y="19" width="15" height="11" rx="2"/><rect x="153" y="22" width="6" height="5"/><circle cx="170" cy="23" r="5.5"/><circle cx="170" cy="23" r="3"/><circle cx="183" cy="20" r="2.5"/><path d="M179 30 V25 Q183 22 187 25 V30"/><circle cx="194" cy="20" r="1.5" fill="#d5ebd5"/><rect x="199" y="17" width="18" height="10" rx="1"/><circle cx="208" cy="22" r="2.5"/><rect x="223" y="19" width="15" height="11" rx="2"/><rect x="232" y="22" width="6" height="5"/><rect x="243" y="17" width="18" height="10" rx="1"/><circle cx="252" cy="22" r="2.5"/><rect x="267" y="19" width="15" height="11" rx="2"/><rect x="276" y="22" width="6" height="5"/><circle cx="291" cy="20" r="2.5"/><path d="M287 30 V25 Q291 22 295 25 V30"/><rect x="-4" y="32" width="18" height="10" rx="1"/><circle cx="5" cy="37" r="2.5"/><circle cx="26" cy="38" r="5.5"/><circle cx="26" cy="38" r="3"/><circle cx="39" cy="35" r="2.5"/><path d="M35 45 V40 Q39 37 43 40 V45"/><circle cx="50" cy="35" r="1.5" fill="#d5ebd5"/><rect x="55" y="32" width="18" height="10" rx="1"/><circle cx="64" cy="37" r="2.5"/><circle cx="85" cy="38" r="5.5"/><circle cx="85" cy="38" r="3"/><circle cx="98" cy="35" r="2.5"/><path d="M94 45 V40 Q98 37 102 40 V45"/><rect x="107" y="32" width="18" height="10" rx="1"/><circle cx="116" cy="37" r="2.5"/><circle cx="135" cy="35" r="2.5"/><path d="M131 45 V40 Q135 37 139 40 V45"/><circle cx="148" cy="35" r="2.5"/><path d="M144 45 V40 Q148 37 152 40 V45"/><circle cx="163" cy="38" r="5.5"/><circle cx="163" cy="38" r="3"/><rect x="172" y="32" width="18" height="10" rx="1"/><circle cx="181" cy="37" r="2.5"/><circle cx="198" cy="35" r="1.5" fill="#d5ebd5"/><rect x="203" y="34" width="15" height="11" rx="2"/><rect x="212" y="37" width="6" height="5"/><rect x="223" y="32" width="18" height="10" rx="1"/><circle cx="232" cy="37" r="2.5"/><rect x="247" y="34" width="15" height="11" rx="2"/><rect x="256" y="37" width="6" height="5"/><circle cx="271" cy="35" r="2.5"/><path d="M267 45 V40 Q271 37 275 40 V45"/><rect x="280" y="32" width="18" height="10" rx="1"/><circle cx="289" cy="37" r="2.5"/><rect x="6" y="47" width="18" height="10" rx="1"/><circle cx="15" cy="52" r="2.5"/><rect x="30" y="49" width="15" height="11" rx="2"/><rect x="39" y="52" width="6" height="5"/><circle cx="54" cy="50" r="2.5"/><path d="M50 60 V55 Q54 52 58 55 V60"/><circle cx="65" cy="50" r="1.5" fill="#d5ebd5"/><rect x="70" y="47" width="18" height="10" rx="1"/><circle cx="79" cy="52" r="2.5"/><circle cx="100" cy="53" r="5.5"/><circle cx="100" cy="53" r="3"/><circle cx="115" cy="53" r="5.5"/><circle cx="115" cy="53" r="3"/><rect x="124" y="47" width="18" height="10" rx="1"/><circle cx="133" cy="52" r="2.5"/><rect x="148" y="47" width="18" height="10" rx="1"/><circle cx="157" cy="52" r="2.5"/><circle cx="178" cy="53" r="5.5"/><circle cx="178" cy="53" r="3"/><rect x="187" y="47" width="18" height="10" rx="1"/><circle cx="196" cy="52" r="2.5"/><circle cx="217" cy="53" r="5.5"/><circle cx="217" cy="53" r="3"/><circle cx="232" cy="53" r="5.5"/><circle cx="232" cy="53" r="3"/><rect x="241" y="49" width="15" height="11" rx="2"/><rect x="250" y="52" width="6" height="5"/><rect x="261" y="47" width="18" height="10" rx="1"/><circle cx="270" cy="52" r="2.5"/><circle cx="289" cy="50" r="2.5"/><path d="M285 60 V55 Q289 52 293 55 V60"/><rect x="298" y="49" width="15" height="11" rx="2"/><rect x="307" y="52" width="6" height="5"/></g><defs><linearGradient id="gf" x1="0" y1="0" x2="0" y2="1"><stop offset="0" stop-color="#fff" stop-opacity="1"/><stop offset="0.35" stop-color="#fff" stop-opacity="0.3"/><stop offset="1" stop-color="#fff" stop-opacity="0"/></linearGradient></defs><rect x="0" y="0" width="296" height="58" fill="url(#gf)"/></svg>
      <div style="position:absolute;left:95px;top:62px;width:51px;height:63px;background:#fff;border:1px solid #f0f0f0;border-radius:2px;box-shadow:2px 2px 6px rgba(0,0,0,.05)"></div>
      <div style="position:absolute;left:151px;top:62px;width:52px;height:63px;background:#fff;border-radius:2px;box-shadow:0 4px 14px rgba(0,0,0,.12)"></div>
      <svg style="position:absolute;left:106px;top:74px" width="28" height="28" viewBox="0 0 28 28">
        <circle cx="14" cy="14" r="14" fill="#e8e8e8"/>
        <path d="M4 24 Q14 16 24 24 Q14 30 4 24Z" fill="#8e9aa3"/>
        <circle cx="14" cy="12" r="5" fill="#fff"/>
        <path d="M8.5 10 Q9 4 14 4.5 Q19 4 19.5 10 Q16 7.5 14 8 Q11 7.5 8.5 10Z" fill="#3d4350"/>
      </svg>
      <svg style="position:absolute;left:162.5px;top:74px" width="28" height="28" viewBox="0 0 28 28">
        <circle cx="14" cy="14" r="14" fill="#e1e8fb"/>
        <rect x="6" y="6" width="10" height="20" fill="#5b7cf0"/>
        <rect x="16" y="12" width="7" height="14" fill="#5b7cf0"/>
        <g fill="#e1e8fb"><rect x="8" y="9" width="1.5" height="1.5"/><rect x="11" y="9" width="1.5" height="1.5"/><rect x="8" y="13" width="1.5" height="1.5"/><rect x="11" y="13" width="1.5" height="1.5"/><rect x="8" y="17" width="1.5" height="1.5"/><rect x="11" y="17" width="1.5" height="1.5"/><rect x="18" y="15" width="1.5" height="1.5"/><rect x="18" y="19" width="1.5" height="1.5"/></g>
      </svg>
      <div style="position:absolute;left:95px;top:108px;width:51px;text-align:center;font-size:3.5px;color:#333;white-space:nowrap">INDIVIDUAL</div>
      <div style="position:absolute;left:151px;top:108px;width:52px;text-align:center;font-size:3.5px;color:#5b7cf0;white-space:nowrap">COMPANY</div>
    </div>
    <div class="lbl" style="top:208px">Company_1</div>
  </div>
</div>
<div class="vsb"><div class="ar"></div><div class="th"></div></div>
</body></html>
